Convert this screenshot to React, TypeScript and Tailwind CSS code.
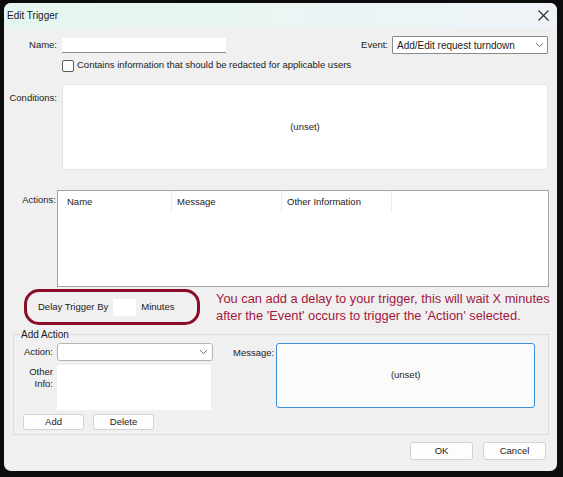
import React from "react";

const font = { fontFamily: '"Liberation Sans", Arial, sans-serif' };

function Chevron() {
  return (
    <svg width="9" height="6" viewBox="0 0 9 6" className="shrink-0">
      <path d="M1 1.2 L4.5 4.6 L8 1.2" fill="none" stroke="#6b6b6b" strokeWidth="1" />
    </svg>
  );
}

function Button({ label, w, h }: { label: string; w: string; h: string }) {
  return (
    <div
      className={`${w} ${h} flex items-center justify-center rounded-[3px] border border-[#d2d2d2] bg-[#fdfdfd] text-[9.5px] text-[#1b1b1b]`}
    >
      {label}
    </div>
  );
}

export default function App() {
  return (
    <div className="w-[563px] h-[477px] bg-[#0d0d0d] pt-[3px] pl-[4px]" style={font}>
      <div className="w-[553px] h-[468px] rounded-[7px] overflow-hidden bg-[#f0f0f0] flex flex-col text-[#1b1b1b]">
        {/* title bar */}
        <div className="h-[25px] shrink-0 flex items-center justify-between pl-[3px] pr-[8px] bg-gradient-to-r from-[#e4f6ef] to-[#eff3f8]">
          <span className="text-[10px] text-[#1a1a1a]">Edit Trigger</span>
          <svg width="11" height="11" viewBox="0 0 11 11">
            <path d="M0.5 0.5 L10.5 10.5 M10.5 0.5 L0.5 10.5" stroke="#2a2a2a" strokeWidth="1.1" />
          </svg>
        </div>

        <div className="flex flex-col text-[9.5px]">
          {/* name / event */}
          <div className="mt-[8px] flex items-center h-[18px]">
            <div className="w-[53px] text-right">Name:</div>
            <div className="ml-[5px] w-[164px] h-[15px] bg-white border-b border-[#8c8c8c]" />
            <div className="ml-auto flex items-center">
              <span>Event:</span>
              <div className="ml-[4px] mr-[9px] w-[156px] h-[18px] bg-white border border-[#8a8a8a] rounded-[1px] flex items-center justify-between pl-[4px] pr-[3px]">
                <span className="text-[10px]">Add/Edit request turndown</span>
                <Chevron />
              </div>
            </div>
          </div>

          {/* redaction checkbox */}
          <div className="mt-[5px] flex items-center h-[13px] pl-[58px]">
            <div className="w-[12px] h-[12px] rounded-[2px] border border-[#5c5c5c] bg-white" />
            <span className="ml-[3px]">Contains information that should be redacted for applicable users</span>
          </div>

          {/* conditions */}
          <div className="mt-[12px] flex items-start">
            <div className="w-[53px] text-right mt-[7px]">Conditions:</div>
            <div className="ml-[5px] w-[486px] h-[86px] bg-white border border-[#e3e3e3] rounded-[3px] flex items-center justify-center">
              (unset)
            </div>
          </div>

          {/* actions table */}
          <div className="mt-[20px] flex items-start">
            <div className="w-[53px] text-right pr-[1px] mt-[3px]">Actions:</div>
            <div className="w-[492px] h-[97px] bg-white border border-[#a3a3a3]">
              <div className="flex h-[22px]">
                <div className="w-[114px] pl-[9px] pt-[4px] border-r border-[#ececec]">Name</div>
                <div className="w-[110px] pl-[5px] pt-[4px] border-r border-[#ececec]">Message</div>
                <div className="w-[110px] pl-[5px] pt-[4px] border-r border-[#ececec]">Other Information</div>
              </div>
            </div>
          </div>

          {/* delay */}
          <div className="mt-[2px] flex items-center">
            <div className="ml-[20px] w-[176px] h-[36px] rounded-[15px] border-[3px] border-[#8a0c26] flex items-center pl-[11px]">
              <span>Delay Trigger By</span>
              <div className="ml-[5px] w-[23px] h-[17px] bg-white" />
              <span className="ml-[5px]">Minutes</span>
            </div>
            <div className="ml-[16px] text-[12.85px] leading-[17px] text-[#a2183d]">
              <div>You can add a delay to your trigger, this will wait X minutes</div>
              <div>after the 'Event' occurs to trigger the 'Action' selected.</div>
            </div>
          </div>

          {/* add action group */}
          <fieldset className="mt-[3px] ml-[9px] w-[536px] h-[107px] border border-[#dcdcdc] pb-[4px]">
            <legend className="ml-[6px] px-[1px] text-[10px] leading-[13px]">Add Action</legend>
            <div className="flex mt-[2px]">
              <div className="flex flex-col">
                <div className="flex items-center h-[18px]">
                  <div className="w-[39px] text-right">Action:</div>
                  <div className="ml-[4px] w-[156px] h-[18px] bg-white border border-[#b4b4b4] rounded-[3px] flex items-center justify-end pr-[4px]">
                    <Chevron />
                  </div>
                </div>
                <div className="mt-[4px] flex items-start">
                  <div className="w-[39px] text-right leading-[12px] mt-[1px]">
                    Other
                    <br />
                    Info:
                  </div>
                  <div className="ml-[4px] w-[154px] h-[45px] bg-white" />
                </div>
                <div className="mt-[4px] flex ml-[9px] gap-[9px]">
                  <Button label="Add" w="w-[61px]" h="h-[16px]" />
                  <Button label="Delete" w="w-[61px]" h="h-[16px]" />
                </div>
              </div>
              <div className="ml-[20px] flex items-start">
                <div className="mt-[3px]">Message:</div>
                <div className="ml-[2px] w-[259px] h-[65px] rounded-[3px] border border-[#3b8fd9] bg-[#fbfbfb] flex items-center justify-center">
                  (unset)
                </div>
              </div>
            </div>
          </fieldset>

          {/* dialog buttons */}
          <div className="mt-[7px] flex justify-end gap-[10px] pr-[11px]">
            <Button label="OK" w="w-[63px]" h="h-[18px]" />
            <Button label="Cancel" w="w-[63px]" h="h-[18px]" />
          </div>
        </div>
      </div>
    </div>
  );
}
